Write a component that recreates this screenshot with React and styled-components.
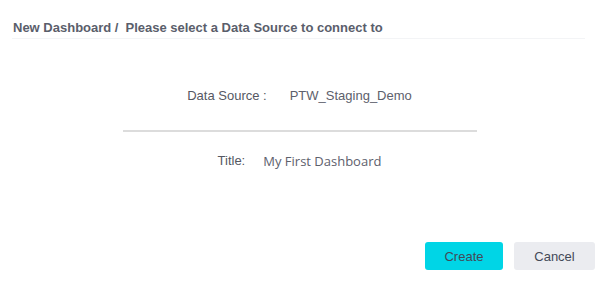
import React from "react";
import styled, { createGlobalStyle } from "styled-components";

const Global = createGlobalStyle`
  html, body { margin: 0; padding: 0; background: #ffffff; }
  body { font-family: "Liberation Sans", Arial, sans-serif; }
`;

const Page = styled.div`
  width: 604px;
  height: 281px;
  box-sizing: border-box;
  display: flex;
  flex-direction: column;
  padding: 20px 19px 0 12px;
`;

const Header = styled.div`
  display: flex;
  align-items: center;
  gap: 7px;
  padding: 0 0 2px 1px;
  border-bottom: 1px solid #f3f4f6;
  font-size: 13px;
  font-weight: 700;
  color: #5a5e6b;
  line-height: 16px;
`;

const Body = styled.div`
  display: flex;
  flex-direction: column;
  align-items: center;
  padding-top: 48px;
  padding-left: 2px;
`;

const Row = styled.div`
  display: flex;
  align-items: center;
  gap: ${(p) => p.$gap}px;
  line-height: 18px;
`;

const Label = styled.span`
  font-size: 13px;
  color: #555863;
`;

const Value = styled.span`
  font-family: ${(p) => (p.$sans ? '"Open Sans", sans-serif' : '"Liberation Sans", Arial, sans-serif')};
  font-size: 13px;
  color: #5d606c;
`;

const Divider = styled.div`
  width: 354px;
  height: 2px;
  background: #dcdcdc;
  margin: 25px 0 20px;
`;

const Footer = styled.div`
  margin-top: auto;
  display: flex;
  justify-content: flex-end;
  gap: 11px;
  padding-bottom: 11px;
  margin-right: -10px;
`;

const Button = styled.button`
  width: ${(p) => p.$w}px;
  height: 28px;
  border: none;
  border-radius: 3px;
  background: ${(p) => (p.$primary ? "#00d5e6" : "#ebecf0")};
  color: #434957;
  font-family: "Liberation Sans", Arial, sans-serif;
  font-size: 13px;
  padding: 0;
  cursor: pointer;
`;

export default function App() {
  return (
    <>
      <Global />
      <Page>
        <Header>
          <span>New Dashboard /</span>
          <span>Please select a Data Source to connect to</span>
        </Header>
        <Body>
          <Row $gap={23}>
            <Label>Data Source :</Label>
            <Value>PTW_Staging_Demo</Value>
          </Row>
          <Divider />
          <Row $gap={18}>
            <Label>Title:</Label>
            <Value $sans>My First Dashboard</Value>
          </Row>
        </Body>
        <Footer>
          <Button $primary $w={78}>Create</Button>
          <Button $w={81}>Cancel</Button>
        </Footer>
      </Page>
    </>
  );
}
